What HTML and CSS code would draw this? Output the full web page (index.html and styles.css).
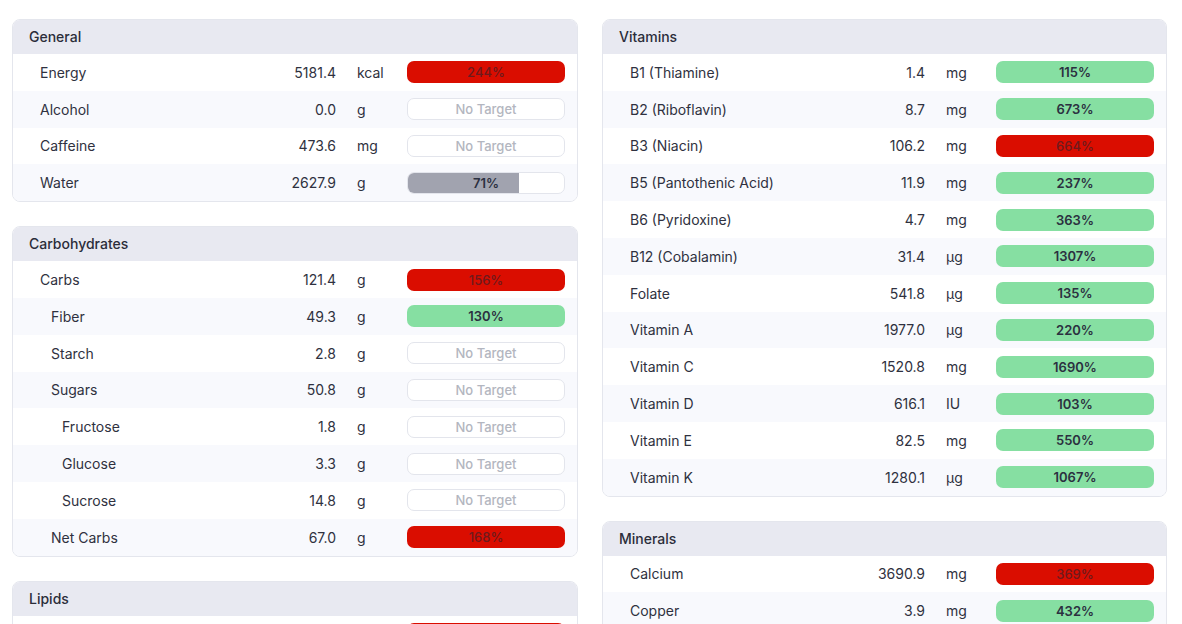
FILE: index.html
```html
<!DOCTYPE html>
<html lang="en">
<head>
    <meta charset="UTF-8">
    <title>Nutrient Targets</title>
    <link rel="stylesheet" href="styles.css">
</head>
<body>
<div class="page">
    <div class="column">
        <div class="card">
            <div class="card-head">General</div>
            <div class="row"><span class="name">Energy</span><span class="value">5181.4</span><span class="unit">kcal</span><div class="bar"><div class="fill red" style="width:100%"></div><span class="pct">244%</span></div></div>
            <div class="row"><span class="name">Alcohol</span><span class="value">0.0</span><span class="unit">g</span><div class="bar empty"><span class="pct">No Target</span></div></div>
            <div class="row"><span class="name">Caffeine</span><span class="value">473.6</span><span class="unit">mg</span><div class="bar empty"><span class="pct">No Target</span></div></div>
            <div class="row"><span class="name">Water</span><span class="value">2627.9</span><span class="unit">g</span><div class="bar partial"><div class="fill gray" style="width:71%"></div><span class="pct">71%</span></div></div>
        </div>

        <div class="card">
            <div class="card-head">Carbohydrates</div>
            <div class="row"><span class="name">Carbs</span><span class="value">121.4</span><span class="unit">g</span><div class="bar"><div class="fill red" style="width:100%"></div><span class="pct">156%</span></div></div>
            <div class="row"><span class="name sub">Fiber</span><span class="value">49.3</span><span class="unit">g</span><div class="bar"><div class="fill green" style="width:100%"></div><span class="pct">130%</span></div></div>
            <div class="row"><span class="name sub">Starch</span><span class="value">2.8</span><span class="unit">g</span><div class="bar empty"><span class="pct">No Target</span></div></div>
            <div class="row"><span class="name sub">Sugars</span><span class="value">50.8</span><span class="unit">g</span><div class="bar empty"><span class="pct">No Target</span></div></div>
            <div class="row"><span class="name subsub">Fructose</span><span class="value">1.8</span><span class="unit">g</span><div class="bar empty"><span class="pct">No Target</span></div></div>
            <div class="row"><span class="name subsub">Glucose</span><span class="value">3.3</span><span class="unit">g</span><div class="bar empty"><span class="pct">No Target</span></div></div>
            <div class="row"><span class="name subsub">Sucrose</span><span class="value">14.8</span><span class="unit">g</span><div class="bar empty"><span class="pct">No Target</span></div></div>
            <div class="row"><span class="name sub">Net Carbs</span><span class="value">67.0</span><span class="unit">g</span><div class="bar"><div class="fill red" style="width:100%"></div><span class="pct">168%</span></div></div>
        </div>

        <div class="card">
            <div class="card-head">Lipids</div>
            <div class="row"><span class="name">Fat</span><span class="value">412.0</span><span class="unit">g</span><div class="bar"><div class="fill red" style="width:100%"></div><span class="pct">549%</span></div></div>
        </div>
    </div>

    <div class="column">
        <div class="card">
            <div class="card-head">Vitamins</div>
            <div class="row"><span class="name">B1 (Thiamine)</span><span class="value">1.4</span><span class="unit">mg</span><div class="bar"><div class="fill green" style="width:100%"></div><span class="pct">115%</span></div></div>
            <div class="row"><span class="name">B2 (Riboflavin)</span><span class="value">8.7</span><span class="unit">mg</span><div class="bar"><div class="fill green" style="width:100%"></div><span class="pct">673%</span></div></div>
            <div class="row"><span class="name">B3 (Niacin)</span><span class="value">106.2</span><span class="unit">mg</span><div class="bar"><div class="fill red" style="width:100%"></div><span class="pct">664%</span></div></div>
            <div class="row"><span class="name">B5 (Pantothenic Acid)</span><span class="value">11.9</span><span class="unit">mg</span><div class="bar"><div class="fill green" style="width:100%"></div><span class="pct">237%</span></div></div>
            <div class="row"><span class="name">B6 (Pyridoxine)</span><span class="value">4.7</span><span class="unit">mg</span><div class="bar"><div class="fill green" style="width:100%"></div><span class="pct">363%</span></div></div>
            <div class="row"><span class="name">B12 (Cobalamin)</span><span class="value">31.4</span><span class="unit">µg</span><div class="bar"><div class="fill green" style="width:100%"></div><span class="pct">1307%</span></div></div>
            <div class="row"><span class="name">Folate</span><span class="value">541.8</span><span class="unit">µg</span><div class="bar"><div class="fill green" style="width:100%"></div><span class="pct">135%</span></div></div>
            <div class="row"><span class="name">Vitamin A</span><span class="value">1977.0</span><span class="unit">µg</span><div class="bar"><div class="fill green" style="width:100%"></div><span class="pct">220%</span></div></div>
            <div class="row"><span class="name">Vitamin C</span><span class="value">1520.8</span><span class="unit">mg</span><div class="bar"><div class="fill green" style="width:100%"></div><span class="pct">1690%</span></div></div>
            <div class="row"><span class="name">Vitamin D</span><span class="value">616.1</span><span class="unit">IU</span><div class="bar"><div class="fill green" style="width:100%"></div><span class="pct">103%</span></div></div>
            <div class="row"><span class="name">Vitamin E</span><span class="value">82.5</span><span class="unit">mg</span><div class="bar"><div class="fill green" style="width:100%"></div><span class="pct">550%</span></div></div>
            <div class="row"><span class="name">Vitamin K</span><span class="value">1280.1</span><span class="unit">µg</span><div class="bar"><div class="fill green" style="width:100%"></div><span class="pct">1067%</span></div></div>
        </div>

        <div class="card">
            <div class="card-head">Minerals</div>
            <div class="row"><span class="name">Calcium</span><span class="value">3690.9</span><span class="unit">mg</span><div class="bar"><div class="fill red" style="width:100%"></div><span class="pct">369%</span></div></div>
            <div class="row"><span class="name">Copper</span><span class="value">3.9</span><span class="unit">mg</span><div class="bar"><div class="fill green" style="width:100%"></div><span class="pct">432%</span></div></div>
            <div class="row"><span class="name">Iron</span><span class="value">58.2</span><span class="unit">mg</span><div class="bar"><div class="fill green" style="width:100%"></div><span class="pct">727%</span></div></div>
        </div>
    </div>
</div>
</body>
</html>
```

FILE: styles.css
```css
body {
    margin: 0;
    font-family: Inter, "Noto Sans", sans-serif;
    background-color: #fff;
    color: #2f3140;
}

.page {
    display: grid;
    grid-template-columns: 566px 565px;
    column-gap: 24px;
    padding: 19px 15px 0 12px;
    align-items: start;
}

.column {
    display: flex;
    flex-direction: column;
    gap: 24px;
}

.card {
    border: 1px solid #e4e6ed;
    border-radius: 8px;
    overflow: hidden;
}

.card-head {
    height: 34px;
    line-height: 34px;
    padding-left: 16px;
    background-color: #e8e9f1;
    font-size: 14px;
    font-weight: 500;
    color: #2b2d3a;
}

.row {
    display: grid;
    grid-template-columns: 1fr 90px 50px 158px;
    align-items: center;
    height: 36.8px;
    padding-right: 12px;
    font-size: 14px;
}

.row:nth-child(odd) {
    background-color: #f8f9fd;
}

.name {
    padding-left: 27px;
}

.name.sub {
    padding-left: 38px;
}

.name.subsub {
    padding-left: 49px;
}

.value {
    text-align: right;
    padding-right: 21px;
}

.bar {
    position: relative;
    height: 22px;
    border-radius: 7px;
    overflow: hidden;
    background-color: #fff;
}

.bar.empty,
.bar.partial {
    height: 20px;
    border: 1px solid #e3e5ec;
}

.fill {
    height: 100%;
}

.fill.red {
    background-color: #da0d00;
}

.fill.green {
    background-color: #86dfa2;
}

.fill.gray {
    background-color: #a1a3af;
}

.pct {
    position: absolute;
    inset: 0;
    display: flex;
    align-items: center;
    justify-content: center;
    font-size: 13px;
    font-weight: 600;
    color: #2b3040;
}

.fill.red + .pct {
    color: #6e1a1d;
    font-weight: 500;
}

.bar.empty .pct {
    color: #b3b6c0;
    font-weight: 500;
}
```
